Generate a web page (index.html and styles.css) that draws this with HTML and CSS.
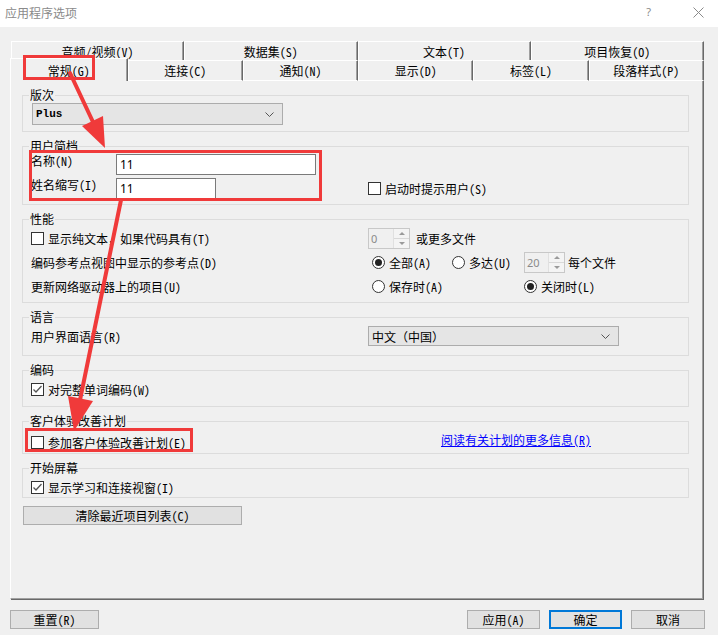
FILE: index.html
```html
<!DOCTYPE html>
<html lang="zh-CN">
<head>
  <meta charset="UTF-8">
  <title>应用程序选项</title>
  <link rel="stylesheet" href="styles.css">
</head>
<body>
  <div class="window">
    <div class="titlebar">
      <span class="title">应用程序选项</span>
      <span class="help">?</span>
      <span class="close">
        <svg width="11" height="11" viewBox="0 0 11 11"><path d="M0.5 0.5L10.5 10.5M10.5 0.5L0.5 10.5" stroke="#8a8a8a" stroke-width="1"/></svg>
      </span>
    </div>

    <div class="dialog">
      <div class="tab-row back">
        <div class="tab">音频/视频(V)</div>
        <div class="tab">数据集(S)</div>
        <div class="tab">文本(T)</div>
        <div class="tab">项目恢复(O)</div>
      </div>
      <div class="tab-row front">
        <div class="tab active">常规(G)</div>
        <div class="tab">连接(C)</div>
        <div class="tab">通知(N)</div>
        <div class="tab">显示(D)</div>
        <div class="tab">标签(L)</div>
        <div class="tab">段落样式(P)</div>
      </div>

      <div class="panel">
        <fieldset class="group g-edition">
          <legend>版次</legend>
          <div class="combo combo-edition">
            <span class="combo-text mono">Plus</span>
            <svg class="chev" width="9" height="5" viewBox="0 0 9 5"><path d="M0.5 0.5L4.5 4.5L8.5 0.5" fill="none" stroke="#555"/></svg>
          </div>
        </fieldset>

        <fieldset class="group g-profile">
          <legend>用户简档</legend>
          <div class="opt-grid">
            <div class="field-row">
              <span class="field-label">名称(N)</span>
              <div class="input input-long">11</div>
            </div>
            <div></div>
            <div class="field-row">
              <span class="field-label">姓名缩写(I)</span>
              <div class="input input-short">11</div>
            </div>
            <div class="check-item"><span class="cb"></span>启动时提示用户(S)</div>
          </div>
        </fieldset>

        <fieldset class="group g-perf">
          <legend>性能</legend>
          <div class="opt-grid">
            <div class="check-item"><span class="cb"></span>显示纯文本，如果代码具有(T)</div>
            <div class="inline-row">
              <div class="spin spin-0"><span class="spin-val">0</span><span class="spin-btns"><i class="up"></i><i class="down"></i></span></div>
              <span>或更多文件</span>
            </div>

            <div>编码参考点视图中显示的参考点(D)</div>
            <div class="inline-row radios">
              <div class="radio-item w80"><span class="rb on"></span>全部(A)</div>
              <div class="radio-item w72"><span class="rb"></span>多达(U)</div>
              <div class="spin spin-20"><span class="spin-val">20</span><span class="spin-btns"><i class="up"></i><i class="down"></i></span></div>
              <span>每个文件</span>
            </div>

            <div>更新网络驱动器上的项目(U)</div>
            <div class="inline-row radios">
              <div class="radio-item w152"><span class="rb"></span>保存时(A)</div>
              <div class="radio-item"><span class="rb on"></span>关闭时(L)</div>
            </div>
          </div>
        </fieldset>

        <fieldset class="group g-lang">
          <legend>语言</legend>
          <div class="opt-grid">
            <div>用户界面语言(R)</div>
            <div class="combo combo-lang">
              <span class="combo-text">中文（中国）</span>
              <svg class="chev" width="9" height="5" viewBox="0 0 9 5"><path d="M0.5 0.5L4.5 4.5L8.5 0.5" fill="none" stroke="#555"/></svg>
            </div>
          </div>
        </fieldset>

        <fieldset class="group g-enc">
          <legend>编码</legend>
          <div class="check-item"><span class="cb checked"><svg width="11" height="11" viewBox="0 0 11 11"><path d="M1.5 5.5L4 8L9.5 2" fill="none" stroke="#555" stroke-width="1.3"/></svg></span>对完整单词编码(W)</div>
        </fieldset>

        <fieldset class="group g-ceip">
          <legend>客户体验改善计划</legend>
          <div class="ceip-row">
            <div class="check-item"><span class="cb"></span>参加客户体验改善计划(E)</div>
            <a class="link" href="#">阅读有关计划的更多信息(R)</a>
          </div>
        </fieldset>

        <fieldset class="group g-start">
          <legend>开始屏幕</legend>
          <div class="check-item"><span class="cb checked"><svg width="11" height="11" viewBox="0 0 11 11"><path d="M1.5 5.5L4 8L9.5 2" fill="none" stroke="#555" stroke-width="1.3"/></svg></span>显示学习和连接视窗(I)</div>
        </fieldset>

        <button class="btn btn-wide">清除最近项目列表(C)</button>
      </div>

      <div class="footer">
        <button class="btn btn-reset">重置(R)</button>
        <span class="spacer"></span>
        <button class="btn btn-apply">应用(A)</button>
        <button class="btn btn-ok">确定</button>
        <button class="btn btn-cancel">取消</button>
      </div>
    </div>

    <!-- 标注层 -->
    <svg class="annot" width="718" height="635" viewBox="0 0 718 635">
      <g fill="none" stroke="#f03a3a" stroke-width="3">
        <rect x="24.5" y="56.5" width="69" height="22"/>
        <rect x="30.5" y="151.5" width="290" height="48"/>
        <rect x="26.5" y="429.5" width="165" height="21"/>
      </g>
      <g stroke="#f03a3a" stroke-width="4" stroke-linecap="round">
        <line x1="70" y1="73" x2="93" y2="122"/>
        <line x1="121" y1="200" x2="80" y2="400"/>
      </g>
      <g fill="#f03a3a">
        <polygon points="105,148 82,126 103,116"/>
        <polygon points="74,431 93,401 68,396"/>
      </g>
    </svg>
  </div>
</body>
</html>
```

FILE: styles.css
```css
/* 对话框基础 */
body {
  margin: 0;
  background: #f0f0f0;
  font-family: "Noto Sans Mono CJK SC", "Noto Sans CJK SC", sans-serif;
  font-size: 12px;
  color: #000;
}

.window {
  position: relative;
  width: 718px;
  height: 635px;
  overflow: hidden;
  background: #f0f0f0;
}

.titlebar {
  height: 27px;
  background: #fff;
  display: flex;
  align-items: center;
  padding-left: 5px;
}

.title {
  font-family: "Noto Sans CJK SC", sans-serif;
  font-size: 12px;
  color: #8a8a8a;
  margin-top: -3px;
}

.help {
  margin-left: auto;
  color: #8a8a8a;
  font-family: "Noto Sans", sans-serif;
  font-size: 11px;
  margin-top: -4px;
}

.close {
  display: flex;
  margin: -3px 14px 0 42px;
}

.dialog {
  padding: 14px 0 0 10px;
}

/* 选项卡 */
.tab-row {
  display: flex;
}

.tab-row.back {
  width: 693px;
  height: 19px;
  margin-left: 1px;
}

.tab-row.front {
  width: 694px;
  height: 23px;
  margin-top: -2px;
  margin-bottom: -1px;
  align-items: flex-end;
  position: relative;
  z-index: 1;
}

.tab {
  flex: 1;
  box-sizing: border-box;
  height: 19px;
  display: flex;
  align-items: center;
  justify-content: center;
  background: #f0f0f0;
  border-top: 1px solid #fff;
  border-left: 1px solid #fff;
  border-right: 1px solid #696969;
  box-shadow: inset -1px 0 0 #a0a0a0;
  white-space: nowrap;
}

.front .tab {
  height: 21px;
  border-bottom: 1px solid #fff;
}

.front .tab.active {
  height: 23px;
  border-bottom: none;
  flex: 1.02;
}

/* 主面板 */
.panel {
  box-sizing: border-box;
  width: 693px;
  height: 519px;
  padding: 7px 13px 0 11px;
  display: flex;
  flex-direction: column;
  gap: 7px;
  border-top: 1px solid #fff;
  border-left: 1px solid #fff;
  border-right: 1px solid #a0a0a0;
  border-bottom: 1px solid #a0a0a0;
  box-shadow: 1px 1px 0 #696969;
}

.group {
  margin: 0;
  min-width: 0;
  border: 1px solid #dcdcdc;
  padding: 0 8px;
}

.group legend {
  padding: 0 1px;
  margin-left: -2px;
  line-height: 14px;
}

.g-edition { padding-top: 1px; padding-bottom: 6px; }
.g-profile { padding-top: 1px; padding-bottom: 5px; }
.g-perf { padding-bottom: 4px; }
.g-lang { padding-bottom: 7px; }
.g-enc { padding-bottom: 5px; }
.g-ceip { padding-top: 3px; }
.g-start { padding-top: 2px; }

.opt-grid {
  display: grid;
  grid-template-columns: 337px 1fr;
  align-items: center;
}

.g-profile .opt-grid {
  grid-auto-rows: 21px;
  row-gap: 3px;
}

.g-perf .opt-grid,
.g-lang .opt-grid {
  grid-auto-rows: 24px;
}

.g-enc .check-item { height: 24px; }
.g-ceip .check-item { height: 22px; }
.g-start .check-item { height: 20px; }

.field-row {
  display: flex;
  align-items: flex-start;
  height: 21px;
}

.field-label {
  width: 85px;
  line-height: 14px;
}

.input {
  box-sizing: border-box;
  height: 21px;
  background: #fff;
  border: 1px solid #7a7a7a;
  padding: 0 3px;
  line-height: 19px;
  font-family: "Noto Sans", sans-serif;
}

.input-long { width: 200px; }
.input-short { width: 100px; }

.inline-row {
  display: flex;
  align-items: center;
}

.radios {
  padding-left: 4px;
}

/* 复选框与单选框 */
.check-item,
.radio-item {
  display: flex;
  align-items: center;
  white-space: nowrap;
}

.cb {
  box-sizing: border-box;
  width: 13px;
  height: 13px;
  border: 1px solid #333;
  background: #fff;
  margin-right: 4px;
  display: flex;
  flex: none;
}

.rb {
  box-sizing: border-box;
  width: 13px;
  height: 13px;
  border: 1px solid #333;
  border-radius: 50%;
  background: #fff;
  margin-right: 4px;
  display: flex;
  align-items: center;
  justify-content: center;
  flex: none;
}

.rb.on::after {
  content: "";
  width: 7px;
  height: 7px;
  border-radius: 50%;
  background: #222;
}

.w80 { width: 80px; }
.w72 { width: 72px; }
.w152 { width: 152px; }

/* 数字框 */
.spin {
  box-sizing: border-box;
  height: 21px;
  border: 1px solid #c8c8c8;
  display: flex;
  align-items: stretch;
  margin-right: 6px;
  color: #8a8a8a;
}

.spin-0 { width: 42px; }
.spin-20 { width: 41px; margin-right: 3px; }

.spin-val {
  flex: 1;
  padding-left: 2px;
  line-height: 19px;
  font-family: "Noto Sans", sans-serif;
  font-size: 11px;
}

.spin-btns {
  width: 15px;
  display: flex;
  flex-direction: column;
  border-left: 1px solid #e0e0e0;
  background: #f4f4f4;
}

.spin-btns i {
  flex: 1;
  display: flex;
  align-items: center;
  justify-content: center;
}

.spin-btns i.up { border-bottom: 1px solid #d8d8d8; }

.spin-btns i.up::after {
  content: "";
  border: 3px solid transparent;
  border-bottom: 3px solid #9a9a9a;
  margin-top: -3px;
}

.spin-btns i.down::after {
  content: "";
  border: 3px solid transparent;
  border-top: 3px solid #9a9a9a;
  margin-bottom: -3px;
}

/* 下拉框 */
.combo {
  box-sizing: border-box;
  height: 22px;
  display: flex;
  align-items: center;
  background: #e5e5e5;
  border: 1px solid #acacac;
  padding: 0 8px 0 3px;
}

.combo-edition { width: 251px; margin-left: 1px; }
.combo-lang { width: 251px; height: 20px; }

.combo-text { flex: 1; }

.mono {
  font-family: "Liberation Mono", monospace;
  font-weight: bold;
  font-size: 11px;
}

.ceip-row {
  display: grid;
  grid-template-columns: 410px auto;
  align-items: center;
}

.link {
  color: #0000ff;
  text-decoration: underline;
  margin-bottom: 5px;
  justify-self: start;
}

/* 按钮 */
.btn {
  box-sizing: border-box;
  height: 19px;
  background: #e1e1e1;
  border: 1px solid #adadad;
  font-family: inherit;
  font-size: 12px;
  color: #000;
  padding: 0;
  line-height: 17px;
}

.btn-wide {
  width: 219px;
  margin: 1px 0 0 1px;
}

.footer {
  display: flex;
  gap: 9px;
  margin-top: 11px;
  padding-right: 13px;
}

.spacer { flex: 1; }

.btn-reset { width: 89px; }
.btn-apply { width: 73px; }
.btn-ok {
  width: 73px;
  border-color: #0078d7;
  box-shadow: inset 0 0 0 1px #0078d7;
}
.btn-cancel { width: 74px; }

/* 红色标注 */
.annot {
  position: absolute;
  top: 0;
  left: 0;
  z-index: 2;
  pointer-events: none;
}
```
